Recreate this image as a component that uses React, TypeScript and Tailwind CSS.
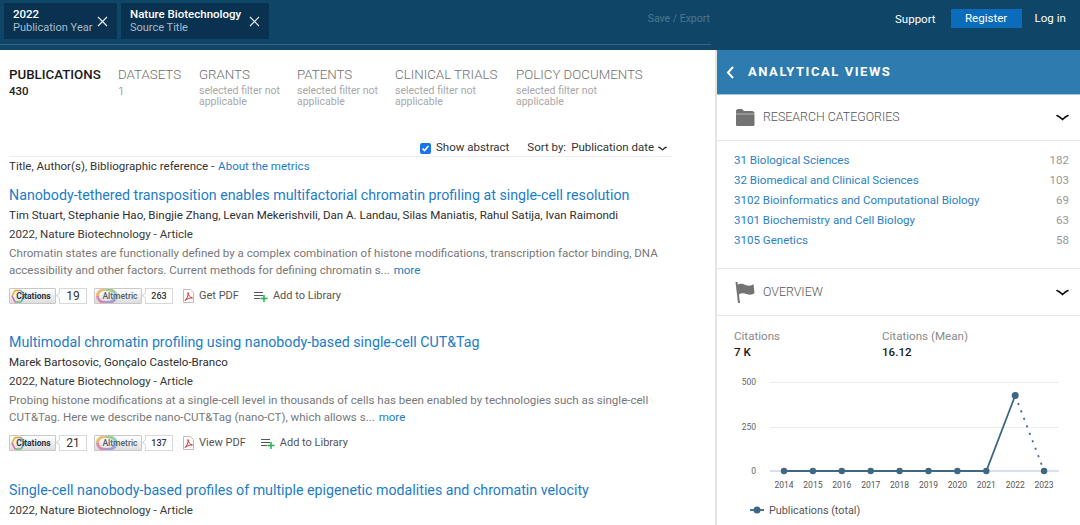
import React from "react";

function X() {
  return (
    <svg width="11" height="11" viewBox="0 0 11 11" className="shrink-0" fill="none" stroke="#e4edf3" strokeWidth="1.2">
      <path d="M1 1l9 9M10 1l-9 9" />
    </svg>
  );
}

function Chevron({ className = "" }: { className?: string }) {
  return (
    <svg width="13" height="7" viewBox="0 0 13 7" fill="none" stroke="currentColor" strokeWidth="1.6" strokeLinecap="round" className={className}>
      <path d="M1 1.500C3.500 2.500 5 4 6.500 5.500 8 4 9.500 2.500 12 1.500" />
    </svg>
  );
}

function Chip({ title, sub, w }: { title: string; sub: string; w: string }) {
  return (
    <div className={`flex items-center justify-between h-[36px] bg-[#08324f] pl-[9px] pr-[9px] ${w}`}>
      <div className="flex flex-col whitespace-nowrap">
        <span className="text-[11.5px] leading-[13px] font-medium text-white">{title}</span>
        <span className="text-[11px] leading-[13px] text-[#a9bccb]">{sub}</span>
      </div>
      <X />
    </div>
  );
}

function Tab({ title, sub, active, w }: { title: string; sub: string; active?: boolean; w: string }) {
  const disabled = sub.startsWith("selected");
  return (
    <div className={w}>
      <div className={`text-[13.3px] leading-[16px] whitespace-nowrap ${active ? "font-medium text-[#1a1a1a]" : "font-light text-[#6f6f6f]"}`}>{title}</div>
      <div
        className={`${
          disabled
            ? "mt-[3px] text-[10.5px] leading-[10.5px] w-[90px] text-[#a8a8a8]"
            : active
              ? "text-[11.5px] leading-[17px] font-medium text-[#222]"
              : "text-[11.5px] leading-[17px] font-light text-[#777]"
        }`}
      >
        {sub}
      </div>
    </div>
  );
}

function CitRing() {
  return (
    <svg width="16" height="16" viewBox="0 0 16 16" className="absolute left-[0px] top-[-1px]" fill="none" strokeWidth="1.6">
      <path d="M2 8L5 2.500" stroke="#e8b73e" />
      <path d="M5 2.500H11" stroke="#e49a3a" />
      <path d="M11 2.500L14.500 8" stroke="#58b7de" />
      <path d="M14.500 8L11 14" stroke="#5aa9d6" />
      <path d="M11 14H5" stroke="#73b889" />
      <path d="M5 14L2 8" stroke="#d66a9e" />
    </svg>
  );
}

function AltRing() {
  return (
    <svg width="24" height="16" viewBox="0 0 24 16" className="absolute left-[0px] top-[-1px]" fill="none" strokeWidth="3" opacity=".7">
      <path d="M2.500 8C2.500 4 6 1.500 11 1.500" stroke="#e8a33d" />
      <path d="M11 1.500C15 1.500 18 2.500 20 4.500" stroke="#7fb765" />
      <path d="M20 4.500C21.500 7 21.500 9 20 11.500" stroke="#5bb3d8" />
      <path d="M20 11.500C18 13.500 15 14.500 11 14.500" stroke="#8b7fc8" />
      <path d="M11 14.500C6 14.500 2.500 12 2.500 8" stroke="#d763a0" />
    </svg>
  );
}

function Badge({ label, count, small, w }: { label: string; count: string; small?: boolean; w: string }) {
  return (
    <div className="flex items-center">
      <div className={`relative h-[16px] ${w} rounded-[1px] border border-[#c8c8c8] bg-gradient-to-b from-white to-[#dedede] flex items-center justify-center overflow-hidden`}>
        {small ? <AltRing /> : <CitRing />}
        <span className={`relative text-[8.5px] leading-none ${small ? "text-[#55606b] font-medium pl-[4px]" : "font-bold text-[#2c3540] pl-[2px]"}`}>{label}</span>
      </div>
      <div className={`relative ml-[3px] h-[16px] w-[28px] border border-[#d8d8d8] bg-white flex items-center justify-center text-[#333] leading-none ${small ? "text-[9px] font-medium" : "text-[12px]"}`}>
        <span className="absolute left-[-3px] top-[4px] w-[5px] h-[5px] rotate-45 bg-white border-l border-b border-[#d8d8d8]" />
        {count}
      </div>
    </div>
  );
}

function PdfIcon() {
  return (
    <svg width="11" height="14" viewBox="0 0 11 14" fill="none">
      <path d="M.5.500h7l3 3v10H.5z" fill="#fff" stroke="#c9b8b4" />
      <path d="M2 11.500C4 10 5.500 6.500 5 3.500 5.500 6.500 7 8.500 9.500 9 7 8.700 4.500 9.500 2 11.500z" stroke="#d5342b" strokeWidth="1" />
    </svg>
  );
}

function LibIcon() {
  return (
    <svg width="14" height="11" viewBox="0 0 14 11" fill="none">
      <path d="M0 1.500h9M0 4.500h9M0 7.500h6" stroke="#555" strokeWidth="1" />
      <path d="M10 4v7M6.500 7.500h7" stroke="#22b14c" strokeWidth="1.500" />
    </svg>
  );
}

function Result({ title, authors, abs1, abs2, c, a, pdf }: { title: string; authors: string; abs1: string; abs2: string; c: string; a: string; pdf: string }) {
  return (
    <div className="h-[147px]">
      <div className="text-[14.22px] leading-[20px] text-[#1c7cc7]">{title}</div>
      <div className="mt-[1px] text-[11.55px] leading-[19px] text-[#2e2e2e]">{authors}</div>
      <div className="text-[11.55px] leading-[19px] text-[#3a3a3a]">2022, Nature Biotechnology - Article</div>
      <div className="mt-[1px] text-[11.55px] leading-[17px] text-[#777]">
        <div>{abs1}</div>
        <div>
          {abs2} <span className="ml-[1px] text-[#1c7cc7]">more</span>
        </div>
      </div>
      <div className="mt-[9px] flex items-center h-[16px] text-[11px] text-[#555]">
        <Badge label="Citations" count={c} w="w-[47px]" />
        <div className="ml-[7px]">
          <Badge label="Altmetric" count={a} small w="w-[48px]" />
        </div>
        <div className="ml-[10px] flex items-center gap-[5px]">
          <PdfIcon />
          <span>{pdf}</span>
        </div>
        <div className="ml-[15px] flex items-center gap-[5px]">
          <LibIcon />
          <span>Add to Library</span>
        </div>
      </div>
    </div>
  );
}

const cats: [string, string][] = [
  ["31 Biological Sciences", "182"],
  ["32 Biomedical and Clinical Sciences", "103"],
  ["3102 Bioinformatics and Computational Biology", "69"],
  ["3101 Biochemistry and Cell Biology", "63"],
  ["3105 Genetics", "58"],
];

function Chart() {
  const years = [2014, 2015, 2016, 2017, 2018, 2019, 2020, 2021, 2022, 2023];
  const xs = years.map((_, i) => 67 + i * 28.9);
  return (
    <svg width="363" height="165" viewBox="0 0 363 165" className="block" fontFamily="Roboto, sans-serif">
      <path d="M53 20.500h289M53 65.500h289" stroke="#eaedf0" />
      <path d="M53 109h289" stroke="#d8e2ee" strokeWidth="2" />
      <g fontSize="8.500" fill="#666" textAnchor="end">
        <text x="39" y="23">500</text>
        <text x="39" y="68">250</text>
        <text x="39" y="112">0</text>
      </g>
      <path d={`M67 109H${xs[7]}L${xs[8]} 33.500`} stroke="#3d6883" strokeWidth="1.800" fill="none" />
      <path d={`M${xs[8]} 33.500L${xs[9]} 109`} stroke="#3d6883" strokeWidth="1.800" strokeDasharray="2 6" fill="none" />
      {years.map((y, i) => (
        <g key={y}>
          <circle cx={xs[i]} cy={i === 8 ? 33.5 : 109} r={i === 8 ? 3.5 : 3.2} fill="#3d6883" />
          <text x={xs[i]} y="126" fontSize="8.500" fill="#555" textAnchor="middle">{y}</text>
        </g>
      ))}
      <path d="M33 148h14" stroke="#3d6883" strokeWidth="1.800" />
      <circle cx="40" cy="148" r="3.500" fill="#3d6883" />
      <text x="52" y="151.500" fontSize="10.800" fill="#555">Publications (total)</text>
    </svg>
  );
}

export default function App() {
  return (
    <div className="w-[1080px] h-[525px] overflow-hidden bg-white flex flex-col font-['Roboto',sans-serif]">
      <header className="h-[50px] shrink-0 bg-[#0f4667] flex">
        <div className="w-[711px] h-[45px] border-b border-[#386580] relative flex pl-[4px] pt-[3px] gap-[4px]">
          <Chip title="2022" sub="Publication Year" w="w-[113px]" />
          <Chip title="Nature Biotechnology" sub="Source Title" w="w-[148px]" />
          <span className="absolute right-[1px] top-[12px] text-[10.5px] leading-[14px] text-[#4d7690]">Save / Export</span>
        </div>
        <div className="flex-1 flex items-start text-[11.5px] text-white">
          <span className="ml-[184px] mt-[11px] leading-[16px]">Support</span>
          <span className="ml-[15px] mt-[9px] w-[71px] h-[19px] bg-[#0b6cbb] flex items-center justify-center">Register</span>
          <span className="ml-[13px] mt-[10px] leading-[16px]">Log in</span>
        </div>
      </header>
      <div className="flex-1 flex min-h-0">
        <main className="w-[715px] shrink-0 pl-[9px] pt-[17px] overflow-hidden">
          <div className="flex h-[69px]">
            <Tab active title="PUBLICATIONS" sub="430" w="w-[109px]" />
            <Tab title="DATASETS" sub="1" w="w-[81px]" />
            <Tab title="GRANTS" sub="selected filter not applicable" w="w-[98px]" />
            <Tab title="PATENTS" sub="selected filter not applicable" w="w-[98px]" />
            <Tab title="CLINICAL TRIALS" sub="selected filter not applicable" w="w-[121px]" />
            <Tab title="POLICY DOCUMENTS" sub="selected filter not applicable" w="w-[130px]" />
          </div>
          <div className="w-[663px] h-[21px] flex items-center justify-end text-[11.5px] text-[#333] border-b border-[#eeeeee] pr-[5px] pt-[4px]">
            <span className="w-[11px] h-[11px] rounded-[2px] bg-[#1a73e8] flex items-center justify-center mr-[5px]">
              <svg width="9" height="9" viewBox="0 0 9 9" fill="none" stroke="#fff" strokeWidth="1.600"><path d="M1.500 4.500l2 2 4-4.500" /></svg>
            </span>
            <span>Show abstract</span>
            <span className="ml-[18px]">Sort by:</span>
            <span className="ml-[5px]">Publication date</span>
            <Chevron className="ml-[4px] w-[9px] text-[#222]" />
          </div>
          <div className="mt-[1px] text-[11.55px] leading-[16px] text-[#333]">
            Title, Author(s), Bibliographic reference - <span className="ml-[1px] text-[#1c7cc7]">About the metrics</span>
          </div>
          <div className="mt-[11px]">
            <Result
              title="Nanobody-tethered transposition enables multifactorial chromatin profiling at single-cell resolution"
              authors="Tim Stuart, Stephanie Hao, Bingjie Zhang, Levan Mekerishvili, Dan A. Landau, Silas Maniatis, Rahul Satija, Ivan Raimondi"
              abs1="Chromatin states are functionally defined by a complex combination of histone modifications, transcription factor binding, DNA"
              abs2="accessibility and other factors. Current methods for defining chromatin s..."
              c="19"
              a="263"
              pdf="Get PDF"
            />
            <Result
              title="Multimodal chromatin profiling using nanobody-based single-cell CUT&Tag"
              authors="Marek Bartosovic, Gonçalo Castelo-Branco"
              abs1="Probing histone modifications at a single-cell level in thousands of cells has been enabled by technologies such as single-cell"
              abs2="CUT&Tag. Here we describe nano-CUT&Tag (nano-CT), which allows s..."
              c="21"
              a="137"
              pdf="View PDF"
            />
            <div className="mt-[1px] text-[14.22px] leading-[20px] text-[#1c7cc7]">Single-cell nanobody-based profiles of multiple epigenetic modalities and chromatin velocity</div>
            <div className="mt-[1px] text-[11.55px] leading-[19px] text-[#3a3a3a]">2022, Nature Biotechnology - Article</div>
            <div className="mt-[2px] text-[11.55px] leading-[17px] text-[#777]">Single-cell profiling of chromatin modalities with nanobody-based methods</div>
          </div>
        </main>
        <aside className="flex-1 border-l-2 border-[#e4e4e4] min-w-0">
          <div className="h-[45px] bg-[#2d7baf] border-b-[1px] border-[#a9c5d9] flex items-center pl-[9px] text-white">
            <svg width="9" height="13" viewBox="0 0 9 13" fill="none" stroke="#fff" strokeWidth="2"><path d="M7 1L2 6.500 7 12" /></svg>
            <span className="ml-[13px] text-[13px] font-bold tracking-[1.55px]">ANALYTICAL VIEWS</span>
          </div>
          <div className="h-[46px] border-b border-[#e6e6e6] flex items-center pl-[18px] pr-[11px]">
            <svg width="21" height="19" viewBox="0 0 21 19"><path d="M1 3c0-1 1-2 2-2h4l2 2h8c1.500 0 2.500 1 2.500 2v11.500c0 1-1 1.500-2 1.500H2.500C1.500 18 1 17.500 1 16.500z" fill="#737373" /><path d="M1 6h19" stroke="#fff" strokeWidth=".5" /></svg>
            <span className="ml-[7px] text-[12.4px] font-light text-[#555]">RESEARCH CATEGORIES</span>
            <Chevron className="ml-auto text-[#111]" />
          </div>
          <div className="h-[128px] pt-[10px] border-b border-[#e6e6e6] pl-[17px] pr-[11px]">
            {cats.map(([n, v]) => (
              <div key={n} className="h-[20px] flex items-center justify-between text-[11.55px]">
                <span className="text-[#2a7fc4]">{n}</span>
                <span className="text-[#999]">{v}</span>
              </div>
            ))}
          </div>
          <div className="h-[47px] border-b border-[#e6e6e6] flex items-center pl-[18px] pr-[11px]">
            <svg width="21" height="23" viewBox="0 0 21 23"><path d="M1.500 1l2.500 21" stroke="#737373" strokeWidth="2" /><path d="M2.500 4c3-2 5-1 8 0s6 1 8-1l1 9c-2 2-5 2-8 1s-5-1-8 .5z" fill="#737373" /></svg>
            <span className="ml-[7px] text-[12.4px] font-light text-[#555]">OVERVIEW</span>
            <Chevron className="ml-auto text-[#111]" />
          </div>
          <div className="flex pl-[17px] pt-[12px] h-[46px]">
            <div className="w-[148px]">
              <div className="text-[11.6px] leading-[16px] text-[#8a8a8a]">Citations</div>
              <div className="text-[11.6px] leading-[16px] font-medium text-[#1a1a1a]">7 K</div>
            </div>
            <div>
              <div className="text-[11.6px] leading-[16px] text-[#8a8a8a]">Citations (Mean)</div>
              <div className="text-[11.6px] leading-[16px] font-medium text-[#1a1a1a]">16.12</div>
            </div>
          </div>
          <Chart />
        </aside>
      </div>
    </div>
  );
}
